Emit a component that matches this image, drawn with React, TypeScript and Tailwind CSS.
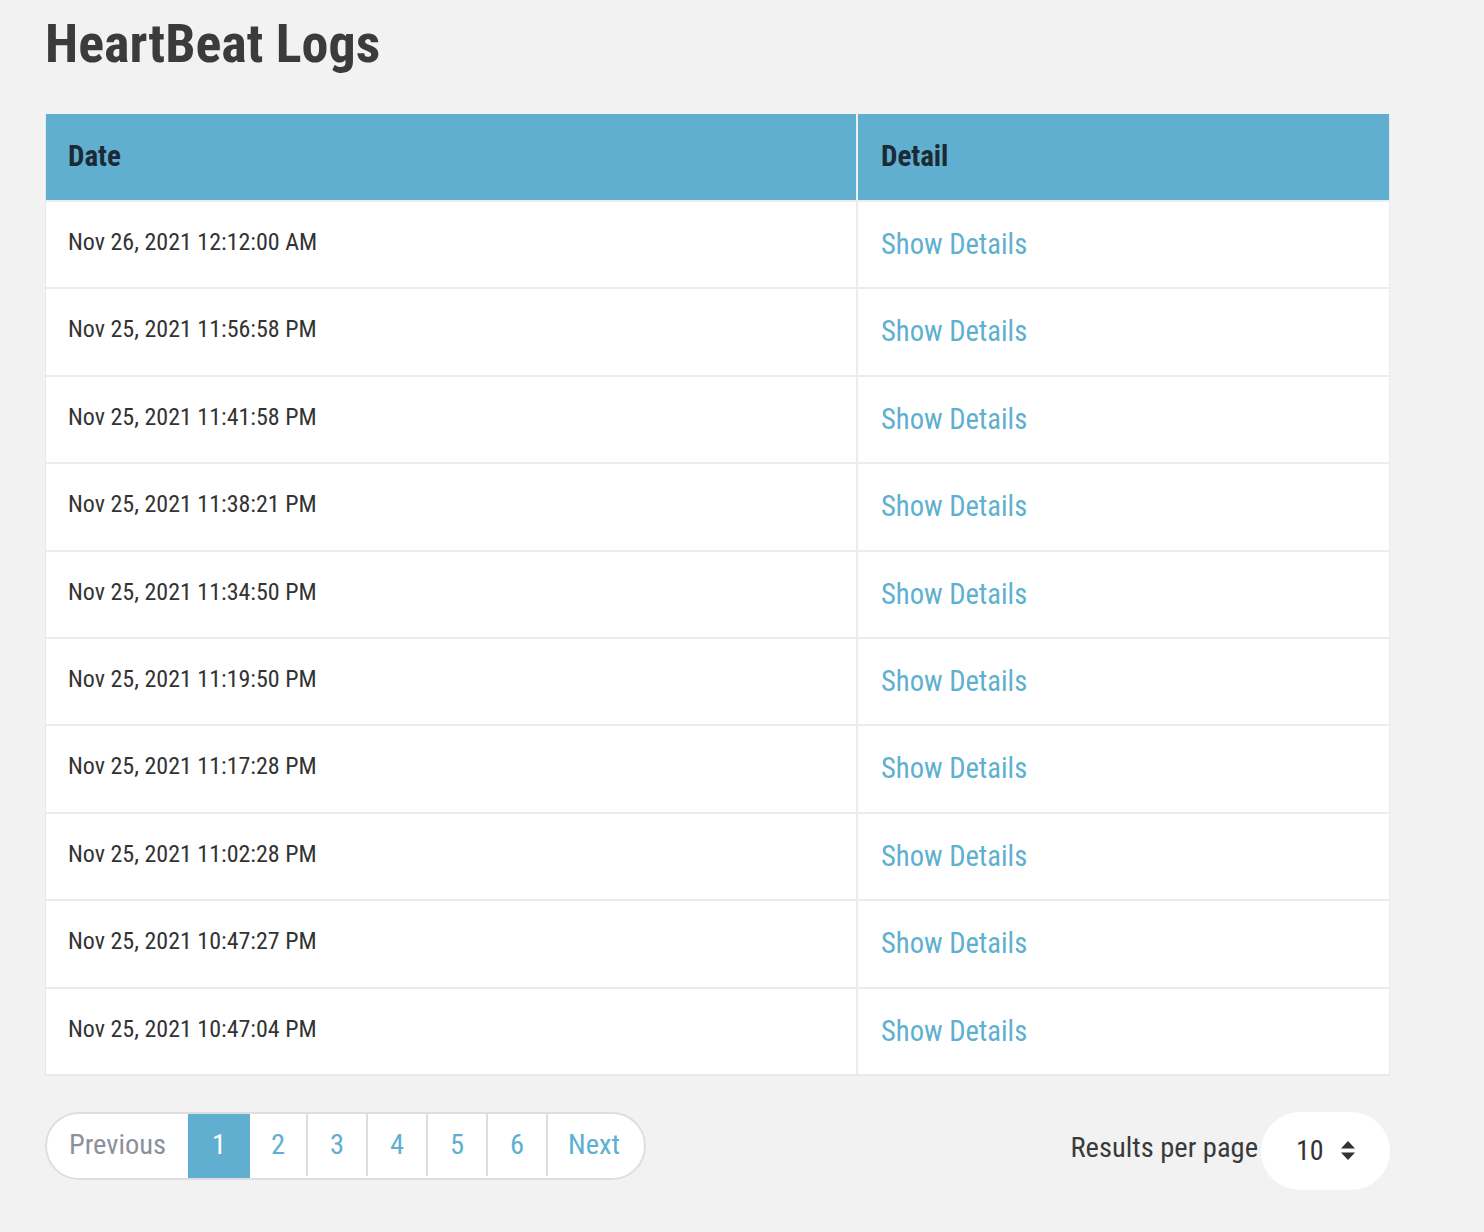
import React from 'react';

const logs = [
  "Nov 26, 2021 12:12:00 AM",
  "Nov 25, 2021 11:56:58 PM",
  "Nov 25, 2021 11:41:58 PM",
  "Nov 25, 2021 11:38:21 PM",
  "Nov 25, 2021 11:34:50 PM",
  "Nov 25, 2021 11:19:50 PM",
  "Nov 25, 2021 11:17:28 PM",
  "Nov 25, 2021 11:02:28 PM",
  "Nov 25, 2021 10:47:27 PM",
  "Nov 25, 2021 10:47:04 PM",
];

const pages = [2, 3, 4, 5, 6];

const App = () => {
  return (
    <div className="min-h-[1232px] bg-[#f2f2f2] pl-[45px] pt-[17px] font-['Roboto_Condensed',Roboto,'Liberation_Sans_Narrow',sans-serif] [font-stretch:condensed]">
      <h1 className="text-[54px] leading-none font-bold text-[#3b3b3b]">HeartBeat Logs</h1>

      {/* Table */}
      <div className="mt-[43px] w-[1345px] border-x border-b-2 border-[#e8e8ee] bg-white">
        <div className="grid h-[86px] grid-cols-[812px_1fr] bg-[#61afd0] text-[29px] font-bold text-[#1b2a35]">
          <div className="flex items-center border-r-2 border-[#eef0f3] pl-[22px]">Date</div>
          <div className="flex items-center pl-[23px]">Detail</div>
        </div>
        {logs.map((date) => (
          <div key={date} className="grid h-[87.4px] grid-cols-[812px_1fr] border-t-2 border-[#ebebf0]">
            <div className="border-r-2 border-[#ebebf0] pl-[22px] pt-[28px] text-[24px] leading-none text-[#333]">
              {date}
            </div>
            <div className="pl-[23px] pt-[28px]">
              <a href="#" className="text-[28.6px] leading-none text-[#5eb0d0]">Show Details</a>
            </div>
          </div>
        ))}
      </div>

      {/* Footer */}
      <div className="mt-[36px] flex w-[1345px] items-start justify-between">
        <div className="flex h-[68px] items-stretch overflow-hidden rounded-full border-2 border-[#dedede] bg-white pb-[2px] text-[28.5px]">
          <div className="flex w-[141px] items-center justify-center text-[#8b9199]">Previous</div>
          <div className="-my-[2px] flex w-[62px] items-center justify-center bg-[#61afd0] text-white">1</div>
          {pages.map((p, i) => (
            <div
              key={p}
              className={
                "flex items-center justify-center border-r-2 border-[#dedede] text-[#5eb0d0] " +
                (i === 0 ? "w-[58px]" : "w-[60px]")
              }
            >
              {p}
            </div>
          ))}
          <div className="flex w-[96px] items-center justify-center pr-[4px] text-[#5eb0d0]">Next</div>
        </div>

        <div className="flex items-center">
          <span className="mb-[6px] mr-[3px] text-[28.5px] text-[#3a3a3a]">Results per page</span>
          <div className="flex h-[78px] w-[129px] items-center rounded-full bg-white pl-[35px] text-[28px] text-[#333]">
            <span>10</span>
            <svg className="ml-[17px]" width="14" height="19" viewBox="0 0 14 19">
              <path d="M7 0 L14 7.5 L0 7.5 Z" fill="#333" />
              <path d="M0 11.5 L14 11.5 L7 19 Z" fill="#333" />
            </svg>
          </div>
        </div>
      </div>
    </div>
  );
};

export default App;
